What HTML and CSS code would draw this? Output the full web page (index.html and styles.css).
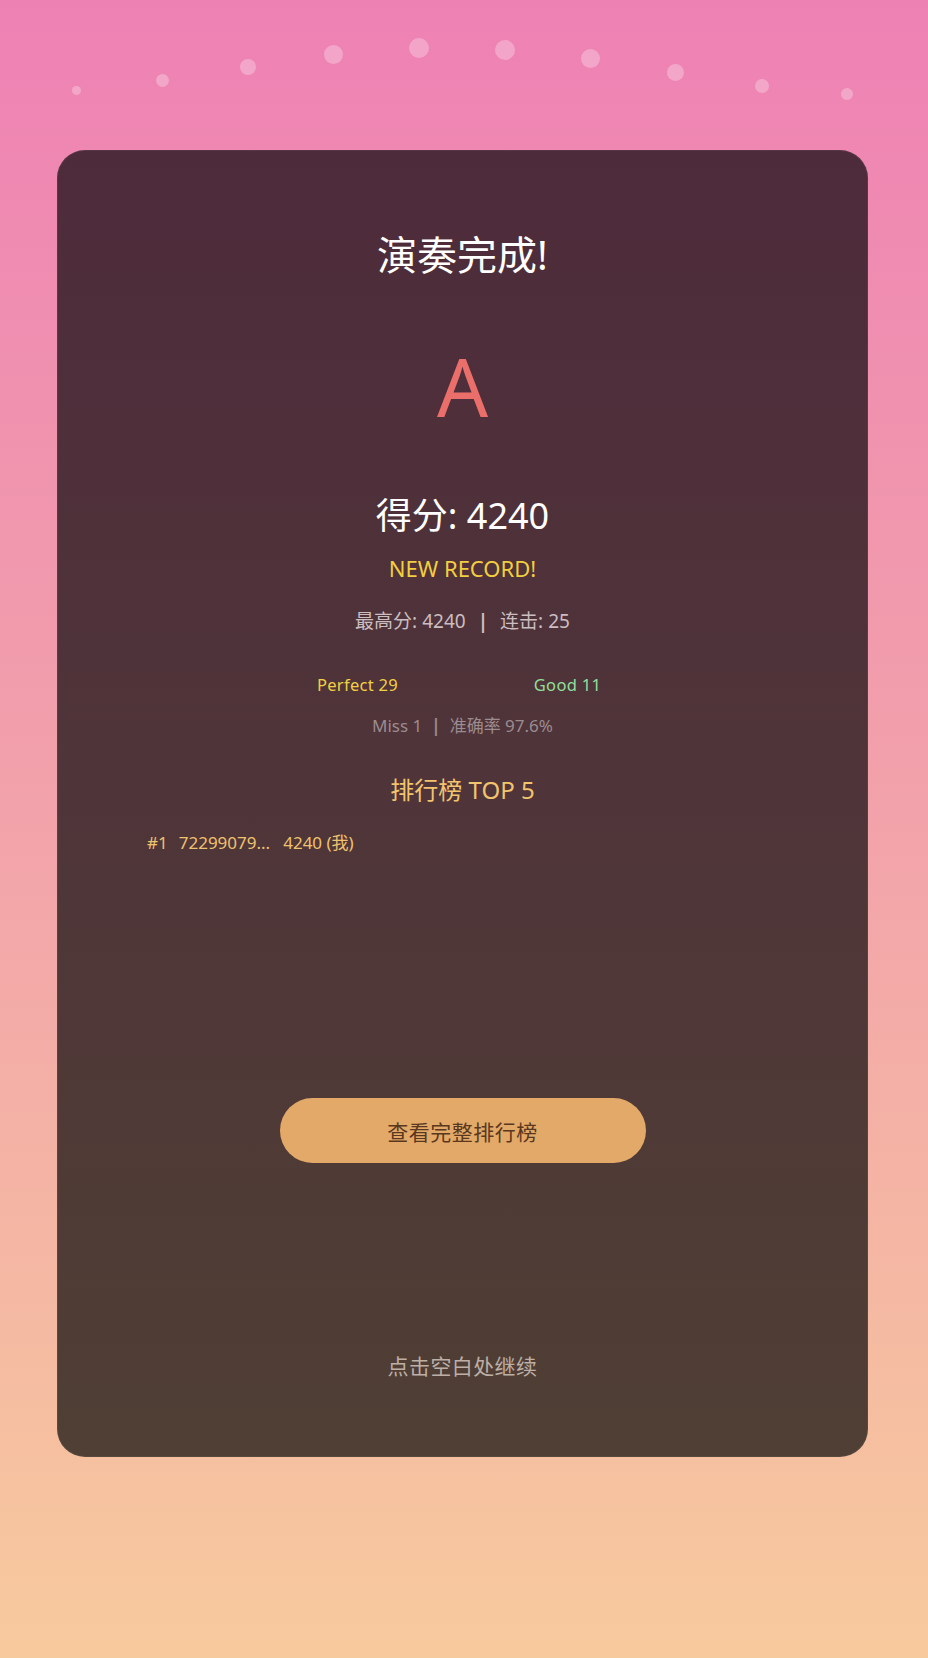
FILE: index.html
```html
<!DOCTYPE html>
<html lang="zh-CN">
<head>
<meta charset="utf-8">
<title>演奏完成</title>
<link rel="stylesheet" href="styles.css">
</head>
<body>
<div class="page">
  <div class="sky">
    <div class="slot"><span class="dot d1"></span></div>
    <div class="slot"><span class="dot d2"></span></div>
    <div class="slot"><span class="dot d3"></span></div>
    <div class="slot"><span class="dot d4"></span></div>
    <div class="slot"><span class="dot d5"></span></div>
    <div class="slot"><span class="dot d6"></span></div>
    <div class="slot"><span class="dot d7"></span></div>
    <div class="slot"><span class="dot d8"></span></div>
    <div class="slot"><span class="dot d9"></span></div>
    <div class="slot"><span class="dot d10"></span></div>
  </div>
  <div class="card">
    <h1 class="title">演奏完成!</h1>
    <div class="grade">A</div>
    <div class="score">得分: 4240</div>
    <div class="record">NEW RECORD!</div>
    <div class="best">最高分: 4240<span class="sep">|</span>连击: 25</div>
    <div class="judges">
      <span class="judge perfect">Perfect 29</span>
      <span class="judge good">Good 11</span>
    </div>
    <div class="miss">Miss 1<span class="sep small">|</span>准确率 97.6%</div>
    <div class="lb-title">排行榜 TOP 5</div>
    <ul class="lb-list">
      <li class="lb-row"><span class="rank">#1</span><span class="name">72299079...</span><span class="pts">4240 (我)</span></li>
    </ul>
    <button class="btn">查看完整排行榜</button>
    <div class="hint">点击空白处继续</div>
  </div>
</div>
</body>
</html>
```

FILE: styles.css
```css
* { box-sizing: border-box; }
html, body { margin: 0; padding: 0; }
body {
  width: 928px;
  min-height: 1658px;
  background: linear-gradient(180deg, #EE81B4 0%, #F2A3AA 50%, #F7CA9D 100%);
  font-family: "Noto Sans", "Noto Sans CJK SC", sans-serif;
  color: #fff;
}
.page {
  height: 1658px;
  display: flex;
  flex-direction: column;
}
.sky {
  height: 150px;
  display: flex;
  padding-left: 34px;
  flex: none;
}
.slot {
  width: 85.6px;
  display: flex;
  justify-content: center;
  align-items: flex-start;
}
.dot {
  display: block;
  border-radius: 50%;
  background: rgba(255, 255, 255, 0.28);
}
.d1 { width: 9px; height: 9px; margin-top: 86px; }
.d2 { width: 13px; height: 13px; margin-top: 74px; }
.d3 { width: 16px; height: 16px; margin-top: 59px; }
.d4 { width: 19px; height: 19px; margin-top: 45px; }
.d5 { width: 20px; height: 20px; margin-top: 38px; }
.d6 { width: 20px; height: 20px; margin-top: 40px; }
.d7 { width: 19px; height: 19px; margin-top: 49px; }
.d8 { width: 17px; height: 17px; margin-top: 64px; }
.d9 { width: 14px; height: 14px; margin-top: 79px; }
.d10 { width: 12px; height: 12px; margin-top: 88px; }

.card {
  margin-left: 57px;
  width: 811px;
  border-radius: 28px;
  background: linear-gradient(180deg, #4E2B3B 0%, #4F3539 50%, #4F3F34 100%);
  box-shadow: inset 0 0 0 1px rgba(255, 255, 255, 0.06);
  padding: 80px 0 76px;
  display: flex;
  flex-direction: column;
  align-items: center;
  text-align: center;
}
.title {
  margin: 0;
  font-size: 40px;
  line-height: 50px;
  font-weight: 400;
  color: #fff;
}
.grade {
  margin-top: 58px;
  font-size: 80px;
  line-height: 96px;
  color: #EA6E6A;
}
.score {
  margin-top: 59px;
  font-size: 36px;
  line-height: 46px;
  color: #fff;
}
.record {
  margin-top: 14px;
  font-size: 22px;
  line-height: 30px;
  color: #F2CF3E;
}
.best {
  margin-top: 24px;
  font-size: 19px;
  line-height: 28px;
  color: #CBBDC0;
}
.sep { margin: 0 12px; font-weight: 700; }
.sep.small { margin: 0 9px; }
.judges {
  margin-top: 38px;
  display: flex;
  justify-content: center;
  line-height: 24px;
  font-size: 16.5px;
  letter-spacing: 0.3px;
}
.judge { width: 210px; text-align: center; }
.perfect { color: #F2D043; }
.good { color: #8FDF9B; }
.miss {
  margin-top: 17px;
  font-size: 17px;
  line-height: 24px;
  color: #9C8B8F;
}
.lb-title {
  margin-top: 36px;
  font-size: 24px;
  line-height: 32px;
  color: #F2C46D;
}
.lb-list {
  list-style: none;
  margin: 24px 0 0;
  padding: 0 0 0 90px;
  align-self: stretch;
  min-height: 200px;
  text-align: left;
}
.lb-row {
  display: flex;
  gap: 11px;
  font-size: 17px;
  line-height: 26px;
  color: #EFC26E;
}
.name { margin-right: 2px; }
.btn {
  margin-top: 68px;
  width: 366px;
  height: 65px;
  border: none;
  border-radius: 33px;
  background: #E3A968;
  color: #5A3820;
  font-family: "Noto Sans", "Noto Sans CJK SC", sans-serif;
  font-size: 21px;
  letter-spacing: 0.5px;
  padding: 0;
}
.hint {
  margin-top: 188px;
  font-size: 21px;
  line-height: 30px;
  letter-spacing: 0.4px;
  color: #BDAEA6;
}
```
